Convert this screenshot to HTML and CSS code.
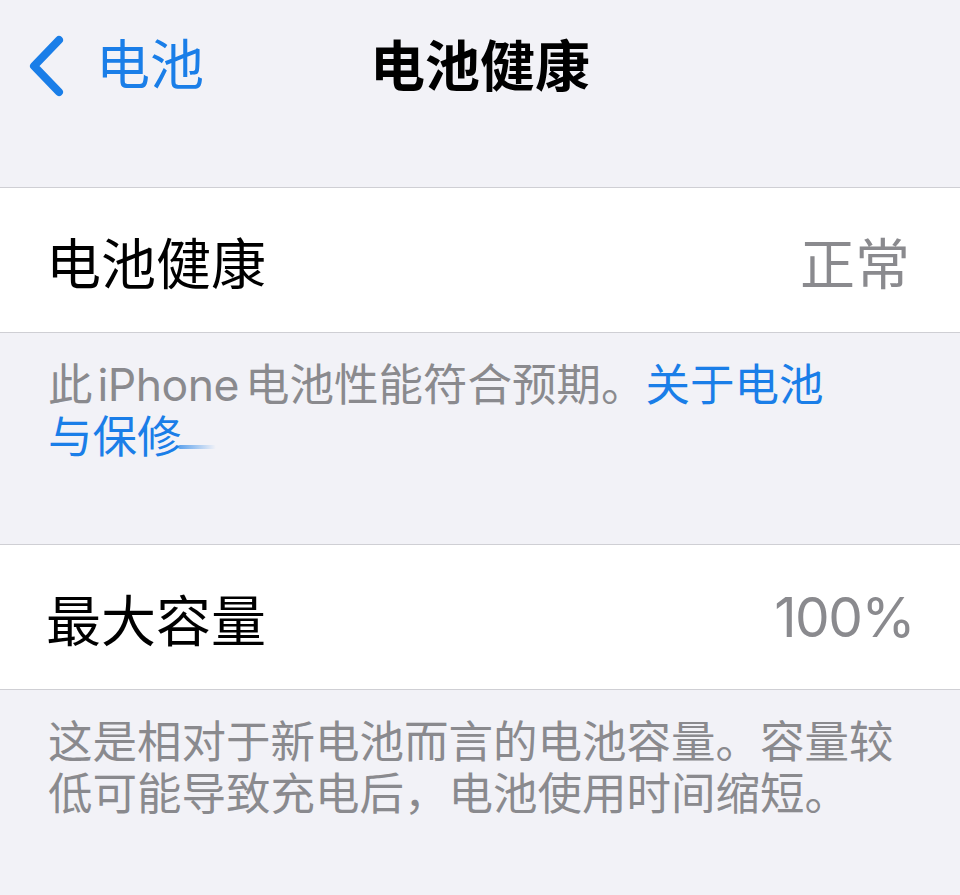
FILE: index.html
```html
<!DOCTYPE html>
<html lang="zh-CN">
<head>
    <meta charset="UTF-8">
    <meta name="viewport" content="width=device-width, initial-scale=1.0">
    <title>电池健康</title>
    <link rel="stylesheet" href="styles.css">
</head>
<body>

<div class="nav-bar">
    <a class="back-btn" href="#">
        <svg class="chevron" viewBox="0 0 40 62" width="40" height="62">
            <path d="M33 5 L8 31 L33 57" fill="none" stroke="currentColor" stroke-width="8" stroke-linecap="round" stroke-linejoin="round"/>
        </svg>
        <span>电池</span>
    </a>
    <div class="nav-title">电池健康</div>
</div>

<div class="group">
    <div class="cell">
        <span class="cell-label">电池健康</span>
        <span class="cell-value">正常</span>
    </div>
</div>
<div class="group-footer">
    此<span class="latin">iPhone</span>电池性能符合预期。<a class="link" href="#">关于电池<br>与保修</a><span class="tap-trail"></span>
</div>

<div class="group">
    <div class="cell">
        <span class="cell-label">最大容量</span>
        <span class="cell-value num">100%</span>
    </div>
</div>
<div class="group-footer">
    这是相对于新电池而言的电池容量。容量较低可能导致充电后，电池使用时间缩短。
</div>

</body>
</html>
```

FILE: styles.css
```css
body {
    margin: 0;
    background-color: #f2f2f7;
    font-family: Inter, "Noto Sans CJK SC", sans-serif;
    color: #000;
}
.nav-bar {
    position: relative;
    height: 132px;
    display: flex;
    align-items: center;
    justify-content: center;
}
.back-btn {
    position: absolute;
    left: 26px;
    top: 35px;
    display: flex;
    align-items: center;
    gap: 30px;
    color: #1a7ee8;
    text-decoration: none;
    font-size: 54px;
    line-height: 62px;
}
.chevron {
    display: block;
}
.nav-title {
    font-size: 55px;
    font-weight: 700;
    line-height: 60px;
}
.group {
    margin-top: 55px;
    background-color: #fff;
    border-top: 1px solid #cfcfd4;
    border-bottom: 1px solid #cfcfd4;
}
.cell {
    height: 144px;
    padding: 0 50px 0 46px;
    display: flex;
    align-items: center;
    justify-content: space-between;
    font-size: 55px;
}
.cell-value {
    color: #8a8a8e;
}
.num {
    letter-spacing: -1.5px;
    margin-right: -4px;
}
.group-footer {
    padding: 26px 50px 26px 48px;
    font-size: 44.5px;
    line-height: 52px;
    color: #8a8a8e;
}
.latin {
    margin: 0 6px 0 5px;
    letter-spacing: -0.5px;
}
.link {
    color: #1a7ee8;
    text-decoration: none;
}
.tap-trail {
    display: inline-block;
    width: 38px;
    height: 4px;
    margin-left: -4px;
    vertical-align: 4px;
    border-radius: 2px;
    background: linear-gradient(to right, rgba(26, 126, 232, 0.7), rgba(26, 126, 232, 0));
}
```
